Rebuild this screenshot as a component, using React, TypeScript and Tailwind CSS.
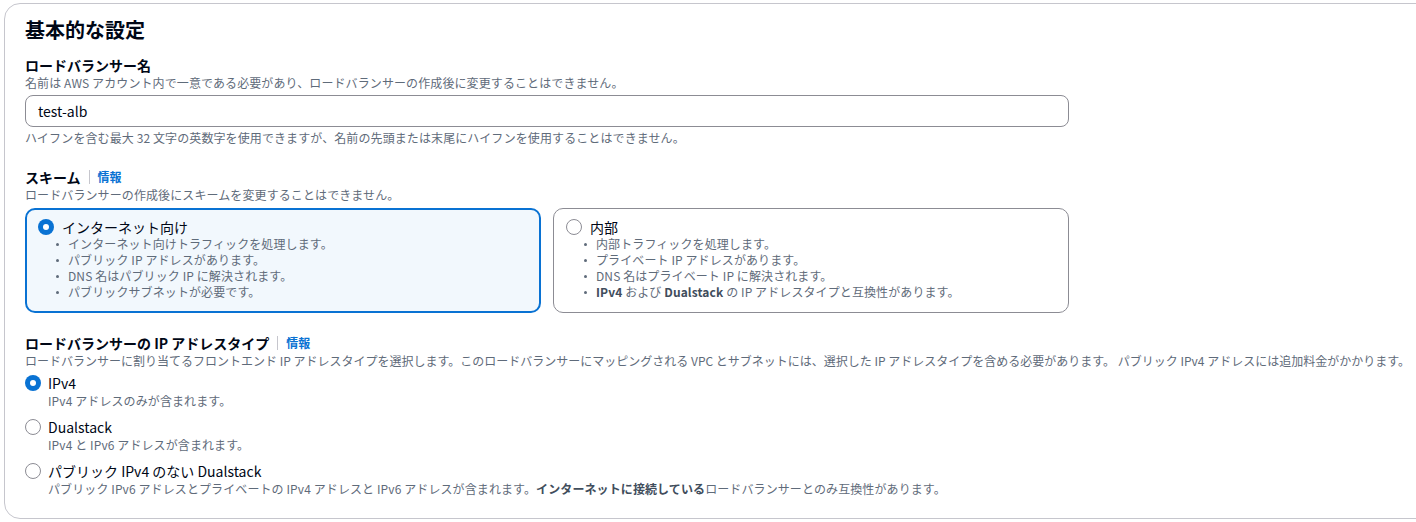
import React from "react";

const font = {
  fontFamily: '"Noto Sans CJK JP", "Noto Sans", sans-serif',
};

function Radio({ checked }: { checked: boolean }) {
  return checked ? (
    <span className="inline-flex h-4 w-4 shrink-0 items-center justify-center rounded-full bg-[#0972d3]">
      <span className="h-[6px] w-[6px] rounded-full bg-white" />
    </span>
  ) : (
    <span className="inline-block h-4 w-4 shrink-0 rounded-full border border-[#8c8c94] bg-white" />
  );
}

function Heading({ children, info }: { children: React.ReactNode; info?: boolean }) {
  return (
    <div className="flex items-center text-[14px] leading-[20px]">
      <span className="font-bold text-[#000716]">{children}</span>
      {info && (
        <span className="ml-[8px] border-l border-[#c6c6cd] pl-[8px] text-[12px] font-bold leading-[14px] text-[#0972d3]">
          情報
        </span>
      )}
    </div>
  );
}

function Desc({ children, className = "" }: { children: React.ReactNode; className?: string }) {
  return (
    <div className={`text-[12px] leading-[16px] tracking-[0.1px] text-[#5f6b7a] ${className}`}>{children}</div>
  );
}

function Tile({
  checked,
  label,
  items,
}: {
  checked: boolean;
  label: string;
  items: React.ReactNode[];
}) {
  return (
    <div
      className={
        checked
          ? "rounded-[10px] border-2 border-[#0972d3] bg-[#f2f8fd] pl-[11px] pr-[11px] pt-[7px] pb-[11px]"
          : "rounded-[10px] border border-[#8c8c94] bg-white pl-[12px] pr-[12px] pt-[8px] pb-[12px]"
      }
    >
      <div className="flex items-center gap-[8px]">
        <Radio checked={checked} />
        <span className="text-[14px] leading-[20px] text-[#000716]">{label}</span>
      </div>
      <ul className="-mt-[1px] pl-[18px]">
        {items.map((it, i) => (
          <li key={i} className="flex items-center text-[12px] leading-[16px] tracking-[0.1px] text-[#5f6b7a]">
            <span className="mr-[9px] h-[3px] w-[3px] shrink-0 rounded-full bg-[#5f6b7a]" />
            <span>{it}</span>
          </li>
        ))}
      </ul>
    </div>
  );
}

function Option({
  checked,
  label,
  desc,
}: {
  checked: boolean;
  label: string;
  desc: React.ReactNode;
}) {
  return (
    <div>
      <div className="flex items-center">
        <Radio checked={checked} />
        <span className="ml-[7px] text-[14px] leading-[20px] text-[#000716]">{label}</span>
      </div>
      <Desc className="pl-[23px]">{desc}</Desc>
    </div>
  );
}

export default function App() {
  return (
    <div className="h-[522px] w-[1416px] overflow-hidden bg-white" style={font}>
      <div className="ml-[4px] mt-[3px] w-[1460px] rounded-2xl border border-[#c6c6cd] pl-[20px] pt-[14px] pb-[21px]">
        <h2 className="text-[20px] font-bold leading-[24px] text-[#000716]">基本的な設定</h2>

        <div className="mt-[13px]">
          <Heading>ロードバランサー名</Heading>
          <Desc>名前は AWS アカウント内で一意である必要があり、ロードバランサーの作成後に変更することはできません。</Desc>
          <div className="mt-[4px] flex h-[32px] w-[1044px] items-center rounded-[8px] border border-[#8c8c94] px-[12px] text-[14px] text-[#000716]">
            test-alb
          </div>
          <Desc className="mt-[3px]">
            ハイフンを含む最大 32 文字の英数字を使用できますが、名前の先頭または末尾にハイフンを使用することはできません。
          </Desc>
        </div>

        <div className="mt-[21px]">
          <Heading info>スキーム</Heading>
          <Desc>ロードバランサーの作成後にスキームを変更することはできません。</Desc>
          <div className="mt-[5px] grid w-[1044px] grid-cols-2 gap-[12px]">
            <Tile
              checked
              label="インターネット向け"
              items={[
                "インターネット向けトラフィックを処理します。",
                "パブリック IP アドレスがあります。",
                "DNS 名はパブリック IP に解決されます。",
                "パブリックサブネットが必要です。",
              ]}
            />
            <Tile
              checked={false}
              label="内部"
              items={[
                "内部トラフィックを処理します。",
                "プライベート IP アドレスがあります。",
                "DNS 名はプライベート IP に解決されます。",
                <>
                  <b className="text-[#414d5c]">IPv4</b> および <b className="text-[#414d5c]">Dualstack</b> の IP アドレスタイプと互換性があります。
                </>,
              ]}
            />
          </div>
        </div>

        <div className="mt-[20px]">
          <Heading info>ロードバランサーの IP アドレスタイプ</Heading>
          <Desc className="whitespace-nowrap !tracking-normal">
            ロードバランサーに割り当てるフロントエンド IP アドレスタイプを選択します。このロードバランサーにマッピングされる VPC とサブネットには、選択した IP アドレスタイプを含める必要があります。 パブリック IPv4 アドレスには追加料金がかかります。
          </Desc>
          <div className="mt-[4px] flex flex-col gap-[8px]">
            <Option checked label="IPv4" desc="IPv4 アドレスのみが含まれます。" />
            <Option checked={false} label="Dualstack" desc="IPv4 と IPv6 アドレスが含まれます。" />
            <Option
              checked={false}
              label="パブリック IPv4 のない Dualstack"
              desc={
                <>
                  パブリック IPv6 アドレスとプライベートの IPv4 アドレスと IPv6 アドレスが含まれます。
                  <b className="text-[#414d5c]">インターネットに接続している</b>ロードバランサーとのみ互換性があります。
                </>
              }
            />
          </div>
        </div>
      </div>
    </div>
  );
}
